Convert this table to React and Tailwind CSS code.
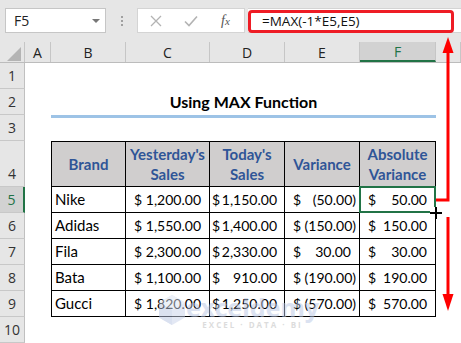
import React from "react";

const ui = { fontFamily: '"Open Sans", "Noto Sans", sans-serif' };
const cell = { fontFamily: 'Lato, "Liberation Sans", sans-serif' };

const colW = [25, 26, 75, 84, 75, 75, 76, 25];
const letters = ["", "A", "B", "C", "D", "E", "F", ""];

const data = [
  ["Nike", "1,200.00", "$ 1,150.00", "(50.00)", "50.00"],
  ["Adidas", "1,550.00", "$ 1,400.00", "(150.00)", "150.00"],
  ["Fila", "2,300.00", "$ 2,330.00", "30.00", "30.00"],
  ["Bata", "1,100.00", "910.00", "(190.00)", "190.00"],
  ["Gucci", "1,820.00", "$ 1,250.00", "(570.00)", "570.00"],
];

function RowHead({ n, h, sel }) {
  return (
    <div
      className={`w-[25px] shrink-0 flex items-end justify-center pb-[2px] border-b border-[#c8c8c8] text-[14px] ${
        sel ? "bg-[#d2d2d2] text-[#217346] border-r-2 border-r-[#217346]" : "bg-[#e6e6e6] text-[#333] border-r border-r-[#c0c0c0]"
      }`}
      style={{ height: h }}
    >
      <span style={ui}>{n}</span>
    </div>
  );
}

function Money({ v, padL = "pl-[8px]" }) {
  const neg = v.startsWith("(");
  return (
    <div className={`flex h-full items-center justify-between ${padL} ${neg ? "pr-[3px]" : "pr-[8px]"}`}>
      <span>$</span>
      <span>{v}</span>
    </div>
  );
}

export default function App() {
  return (
    <div className="relative w-[461px] h-[343px] overflow-hidden bg-white text-black">
      {/* formula bar */}
      <div className="h-[42px] bg-[#e6e6e6] flex items-start pt-[8px]">
        <div className="ml-[5px] w-[101px] h-[25px] bg-white border border-[#c6c6c6] flex items-center justify-between pl-[8px] pr-[5px]">
          <span style={ui} className="text-[14px] text-[#222]">F5</span>
          <span className="w-0 h-0 border-l-[4px] border-r-[4px] border-t-[4px] border-l-transparent border-r-transparent border-t-[#777]" />
        </div>
        <div className="w-[31px] h-[25px] flex flex-col items-center justify-center gap-[2px]">
          <span className="w-[2px] h-[2px] bg-[#a0a0a0]" />
          <span className="w-[2px] h-[2px] bg-[#a0a0a0]" />
          <span className="w-[2px] h-[2px] bg-[#a0a0a0]" />
        </div>
        <div className="w-[108px] h-[25px] bg-white border border-[#d4d4d4] flex items-center">
          <svg width="12" height="12" viewBox="0 0 12 12" className="ml-[12px]">
            <path d="M1 1L11 11M11 1L1 11" stroke="#b3b3b3" strokeWidth="1.3" />
          </svg>
          <svg width="14" height="12" viewBox="0 0 14 12" className="ml-[22px]">
            <path d="M1 6.5L5 10.5L13 1.5" stroke="#b3b3b3" strokeWidth="1.6" fill="none" />
          </svg>
          <span className="ml-[23px] text-[14px] italic text-[#555]" style={{ fontFamily: '"Liberation Serif", serif' }}>
            f<span className="text-[11px]">x</span>
          </span>
        </div>
        <div className="ml-[3px] flex-1 h-[25px] bg-white border-y border-[#d4d4d4] relative">
          <div className="absolute left-0 top-[1px] w-[206px] h-[23px] border-[3px] border-[#ee1c25] rounded-[4px]" />
          <span style={ui} className="absolute left-[14px] top-[2px] text-[13.5px] text-[#111]">=MAX(-1*E5,E5)</span>
        </div>
      </div>

      {/* column headers */}
      <div className="flex h-[21px] bg-[#e6e6e6] border-b border-[#bcbcbc]">
        {letters.map((l, i) => (
          <div
            key={i}
            className={`shrink-0 flex items-center justify-center text-[14px] border-r border-[#c6c6c6] ${
              l === "F" ? "bg-[#d2d2d2] text-[#217346] border-b-2 border-b-[#217346]" : "text-[#222]"
            }`}
            style={{ width: colW[i], ...ui }}
          >
            {i === 0 ? (
              <svg width="14" height="14" viewBox="0 0 14 14" className="ml-[4px] mt-[4px]">
                <path d="M14 0L14 14L0 14Z" fill="#b4b4b4" />
              </svg>
            ) : (
              l
            )}
          </div>
        ))}
      </div>

      {/* rows */}
      <div style={cell} className="text-[14px] text-black">
        <div className="flex h-[26px]">
          <RowHead n={1} h={26} />
        </div>
        <div className="flex h-[26px]">
          <RowHead n={2} h={26} />
          <div className="w-[26px]" />
          <div className="w-[385px] flex items-end justify-center pb-[1px] text-[16px] font-bold">Using MAX Function</div>
        </div>
        <div className="flex h-[26px]">
          <RowHead n={3} h={26} />
          <div className="w-[26px]" />
          <div className="w-[385px] h-[3px] bg-[#9dc3e6]" />
        </div>
        <div className="flex h-[46px]">
          <RowHead n={4} h={46} />
          <div className="w-[26px]" />
          <div className="flex bg-[#d0cece] border border-black text-[#2f5597] font-bold text-[15px] leading-[20px] text-center">
            <div className="w-[74px] border-r border-black flex items-center justify-center">Brand</div>
            <div className="w-[84px] border-r border-black flex items-center justify-center">Yesterday's<br />Sales</div>
            <div className="w-[75px] border-r border-black flex items-center justify-center">Today's<br />Sales</div>
            <div className="w-[75px] border-r border-black flex items-center justify-center">Variance</div>
            <div className="w-[75px] flex items-center justify-center">Absolute<br />Variance</div>
          </div>
        </div>
        {data.map((r, i) => (
          <div key={i} className="flex h-[26px]">
            <RowHead n={5 + i} h={26} sel={i === 0} />
            <div className="w-[26px]" />
            <div className="flex border-x border-b border-black">
              <div className="w-[74px] border-r border-black flex items-center pl-[3px] text-[15px]">{r[0]}</div>
              <div className="w-[84px] border-r border-black">
                <Money v={r[1]} />
              </div>
              <div className="w-[75px] border-r border-black">
                <div className="flex h-full items-center justify-between pl-[2px] pr-[7px]">
                  <span>$</span>
                  <span>{r[2].startsWith("$") ? r[2].slice(2) : r[2]}</span>
                </div>
              </div>
              <div className="w-[75px] border-r border-black">
                <Money v={r[3]} />
              </div>
              <div className="w-[75px] relative">
                <Money v={r[4]} />
                {i === 0 && <div className="absolute left-[-1px] top-[-1px] w-[77px] h-[27px] border-2 border-[#217346]" />}
              </div>
            </div>
          </div>
        ))}
        <div className="flex h-[26px]">
          <RowHead n={10} h={26} />
        </div>
      </div>

      {/* watermark */}
      <div className="absolute left-[158px] top-[294px] flex items-start opacity-50 pointer-events-none">
        <svg width="28" height="32" viewBox="0 0 28 32">
          <path d="M14 1L27 8.5V23.5L14 31L1 23.5V8.5Z" fill="#c9d3ea" />
          <path d="M14 1L27 8.5L14 16L1 8.5Z" fill="#dde4f3" />
          <path d="M14 16V31L1 23.5V8.5Z" fill="#b7c4e3" />
        </svg>
        <div className="flex flex-col items-center">
          <span className="text-[25px] leading-[26px] font-bold text-[#b9c6e4]" style={{ fontFamily: '"Noto Sans", sans-serif' }}>exceldemy</span>
          <span className="text-[8px] leading-[10px] tracking-[2px] text-[#bbbbbb] font-bold" style={ui}>EXCEL · DATA · BI</span>
        </div>
      </div>

      {/* red arrows and fill cursor */}
      <svg className="absolute left-0 top-0 pointer-events-none" width="461" height="343" viewBox="0 0 461 343">
        <path d="M436 200H448V50" stroke="#f00" strokeWidth="3" fill="none" />
        <polygon points="448,37 442.5,53 453.5,53" fill="#f00" />
        <path d="M448 217V297" stroke="#f00" strokeWidth="3" fill="none" />
        <polygon points="448,311 442.5,294 453.5,294" fill="#f00" />
        <path d="M436 207V219M430 213H442" stroke="#fff" strokeWidth="4" />
        <path d="M436 207V219M430 213H442" stroke="#000" strokeWidth="2" />
      </svg>
    </div>
  );
}
